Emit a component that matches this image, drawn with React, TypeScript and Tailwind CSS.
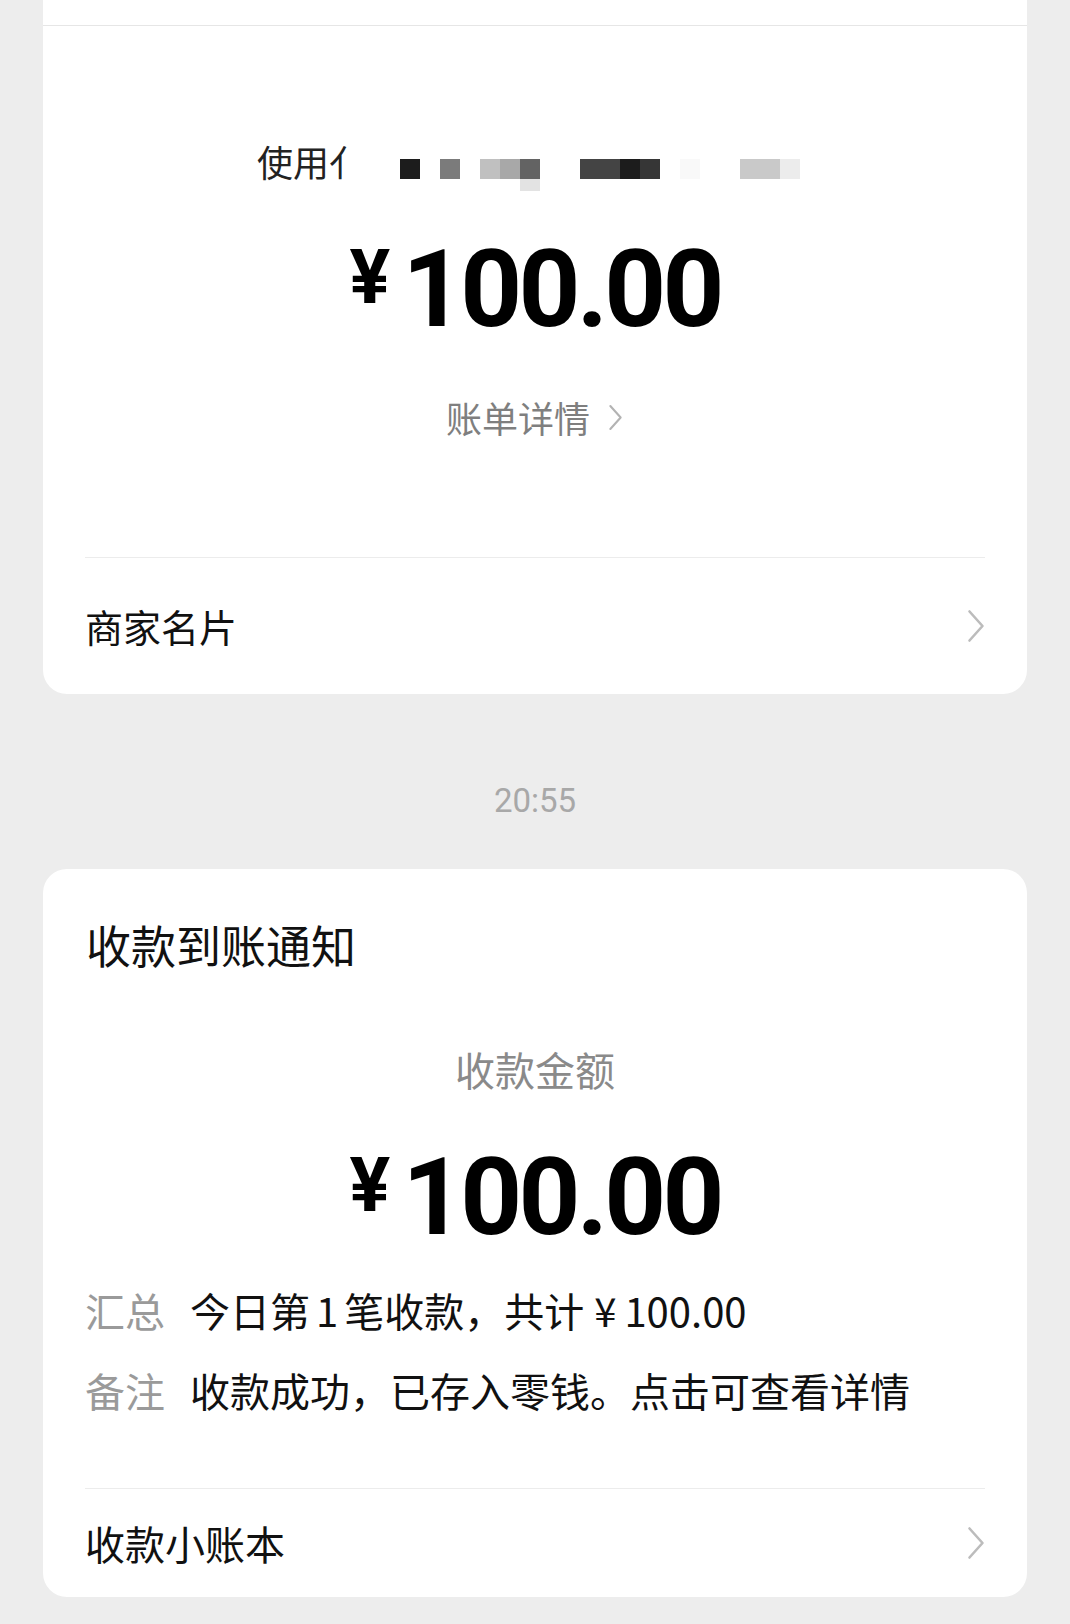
const cjk = "font-['Noto_Sans_CJK_SC',sans-serif]";
const num = "font-['Roboto','Noto_Sans_CJK_SC',sans-serif]";

const Chevron = ({ className = "" }: { className?: string }) => (
  <svg className={className} viewBox="0 0 18 34" fill="none" stroke="currentColor" strokeWidth={2.6} strokeLinecap="round" strokeLinejoin="round">
    <path d="M2.5 2.5 L15.5 17 L2.5 31.5" />
  </svg>
);

// one mosaic cell of the blurred-out line
const Cell = ({ color, w = 20 }: { color: string; w?: number }) => (
  <div className="h-[20px]" style={{ width: w, background: color }} />
);

const Amount = () => (
  <div className={`flex justify-center items-start text-black ${num}`}>
    <span className="mt-[4px] text-[76px] leading-none font-bold">¥</span>
    <span className="ml-[12px] text-[108px] leading-none font-bold tracking-[-0.035em]">100.00</span>
  </div>
);

const LinkRow = ({ label, size }: { label: string; size: string }) => (
  <div className="flex items-center justify-between h-full px-[42px]">
    <span className={`${size} leading-none text-[#111] ${cjk}`}>{label}</span>
    <Chevron className="w-[18px] h-[34px] text-[#bcbcbc]" />
  </div>
);

export default function App() {
  return (
    <div className="min-h-[1624px] bg-[#ededed] pb-[26px]">
      {/* payment card, top part scrolled away */}
      <div className="mx-[43px] bg-white rounded-b-[24px]">
        <div className="h-[26px] border-b border-[#e6e6e6]" />

        <div className="pt-[117px] pl-[214px] flex items-start h-[153px]">
          <span className={`text-[36px] leading-none whitespace-nowrap text-[#222] ${cjk}`}>使用亻</span>
          <div className="mt-[16px] ml-[35px] flex items-start">
            <Cell color="#1c1c1c" />
            <div className="w-[20px]" />
            <Cell color="#7b7b7b" />
            <div className="w-[20px]" />
            <Cell color="#c0c0c0" />
            <Cell color="#a8a8a8" />
            <div className="flex flex-col">
              <Cell color="#636363" />
              <div className="h-[12px] w-[20px] bg-[#e3e3e3]" />
            </div>
            <div className="w-[40px]" />
            <Cell color="#444444" w={40} />
            <Cell color="#1c1c1c" />
            <Cell color="#363636" />
            <div className="w-[20px]" />
            <Cell color="#f9f9f9" />
            <div className="w-[40px]" />
            <Cell color="#c9c9c9" w={40} />
            <Cell color="#ececec" />
          </div>
        </div>

        <div className="mt-[56px]">
          <Amount />
        </div>

        <div className="mt-[56px] flex justify-center items-center">
          <span className={`text-[36px] leading-none text-[#7f7f7f] ${cjk}`}>账单详情</span>
          <Chevron className="ml-[17px] w-[17px] h-[27px] text-[#b3b3b3]" />
        </div>

        <div className="mt-[122px] mx-[42px] h-px bg-[#ececec]" />
        <div className="h-[136px]">
          <LinkRow label="商家名片" size="text-[38px]" />
        </div>
      </div>

      <div className={`mt-[90px] text-center text-[33px] leading-none text-[#a8a8a8] ${num}`}>20:55</div>

      {/* receipt notice card */}
      <div className="mt-[52px] mx-[43px] bg-white rounded-[24px]">
        <div className={`pt-[53px] px-[43px] text-[45px] leading-none text-[#111] ${cjk}`}>收款到账通知</div>

        <div className={`mt-[82px] text-center text-[40px] leading-none text-[#8a8a8a] ${cjk}`}>收款金额</div>

        <div className="mt-[54px]">
          <Amount />
        </div>

        <div className={`mt-[39px] px-[42px] flex flex-col gap-[40px] text-[40px] leading-none ${cjk}`}>
          <div className="flex">
            <span className="text-[#9a9a9a]">汇总</span>
            <span className="ml-[25px] text-[#111] whitespace-nowrap">
              今日第<span className="mx-[6px]">1</span>笔收款，共计<span className="ml-[10px] mr-[8px]">¥</span>100.00
            </span>
          </div>
          <div className="flex">
            <span className="text-[#9a9a9a]">备注</span>
            <span className="ml-[25px] text-[#111]">收款成功，已存入零钱。点击可查看详情</span>
          </div>
        </div>

        <div className="mt-[78px] mx-[42px] h-px bg-[#ececec]" />
        <div className="h-[108px]">
          <LinkRow label="收款小账本" size="text-[40px]" />
        </div>
      </div>
    </div>
  );
}
